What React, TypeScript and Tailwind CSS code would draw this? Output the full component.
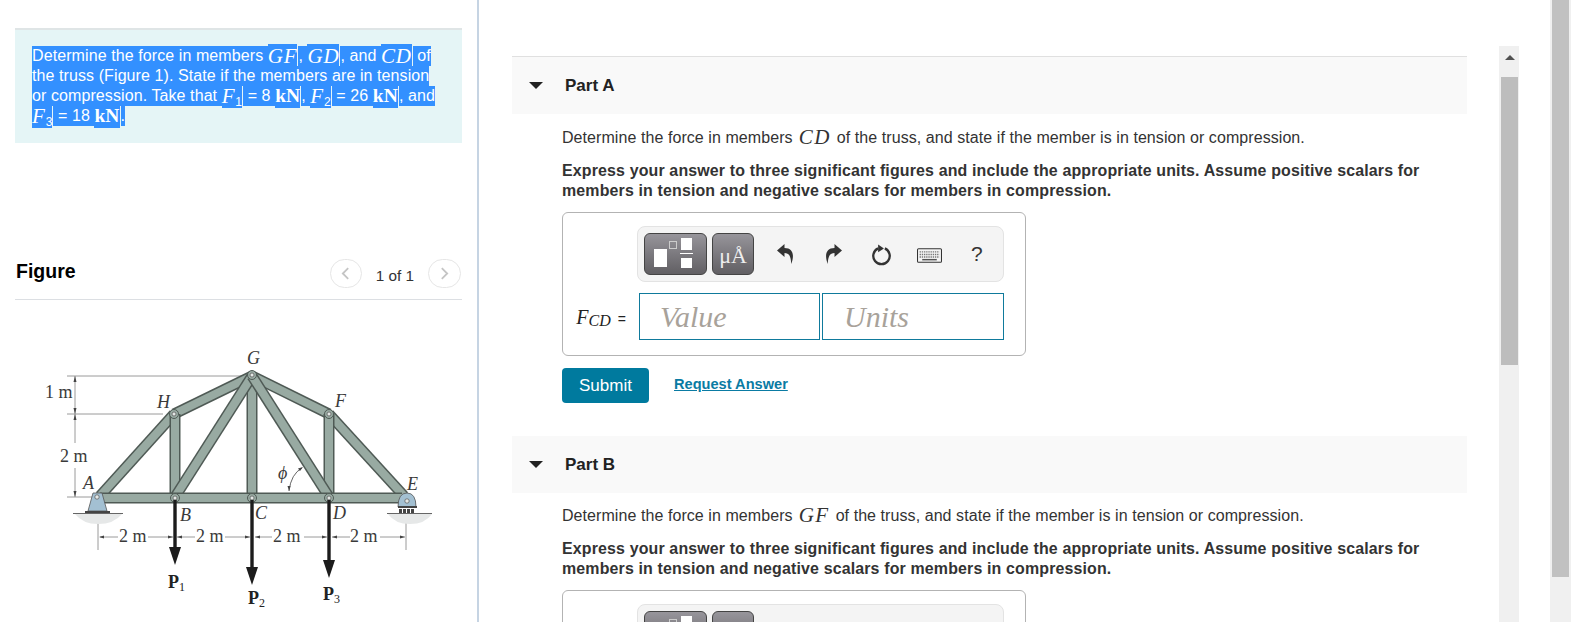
import type { ReactNode } from "react";

const sans = "font-['Liberation_Sans',Arial,sans-serif]";

// blue "selected text" run
const Sel = ({ children, tall = false }: { children: ReactNode; tall?: boolean }) => (
  <span
    className={
      tall
        ? "mr-px -my-[2px] inline-block h-6 whitespace-pre bg-[#3390ff] pt-[2px] align-top leading-5 text-white"
        : "inline-block h-5 whitespace-pre bg-[#3390ff] align-top leading-5 text-white"
    }
  >
    {children}
  </span>
);

const M = ({ children }: { children: ReactNode }) => (
  <span className="font-['Liberation_Serif',serif] text-[21px] italic leading-none tracking-[0.8px]">{children}</span>
);

const Kn = () => <b className="font-['Liberation_Serif',serif] text-[19.5px] leading-none">kN</b>;

const Sub = ({ children }: { children: ReactNode }) => <sub className="text-[12px] leading-none">{children}</sub>;

const Bar = ({ x1, y1, x2, y2, w = 11 }: { x1: number; y1: number; x2: number; y2: number; w?: number }) => (
  <g>
    <line x1={x1} y1={y1} x2={x2} y2={y2} stroke="#4f5a55" strokeWidth={w} />
    <line x1={x1} y1={y1} x2={x2} y2={y2} stroke="#98aaa2" strokeWidth={w - 3} />
  </g>
);

const Pin = ({ x, y }: { x: number; y: number }) => (
  <g>
    <circle cx={x} cy={y} r={4.5} fill="#98aaa2" stroke="#4f5a55" strokeWidth={1} />
    <circle cx={x} cy={y} r={2} fill="#e4e8e6" stroke="#555" strokeWidth={0.7} />
  </g>
);

const Force = ({ x, y1, y2 }: { x: number; y1: number; y2: number }) => (
  <g>
    <line x1={x} y1={y1} x2={x} y2={y2} stroke="#1c1c1c" strokeWidth={3.4} />
    <polygon points={`${x - 6},${y2} ${x + 6},${y2} ${x},${y2 + 18}`} fill="#1c1c1c" />
  </g>
);

const tipsRight = [173, 250, 327, 405];
const tipsLeft = [99, 177, 255, 332];

const Truss = () => (
  <svg viewBox="0 0 447 282" width="447" height="282" className="block font-['Liberation_Serif',serif]">
    <g transform="translate(-15,-340)">
      {/* dimension lines */}
      <g stroke="#9a9a9a" strokeWidth="1" fill="none">
        <line x1="67" y1="376" x2="250" y2="376" />
        <line x1="67" y1="414" x2="163" y2="414" />
        <line x1="67" y1="497" x2="93" y2="497" />
        <line x1="75" y1="376" x2="75" y2="443" />
        <line x1="75" y1="468" x2="75" y2="497" />
        <line x1="98" y1="520" x2="98" y2="550" />
        <line x1="406" y1="520" x2="406" y2="550" />
        <line x1="100" y1="537" x2="118" y2="537" />
        <line x1="148" y1="537" x2="173" y2="537" />
        <line x1="177" y1="537" x2="195" y2="537" />
        <line x1="225" y1="537" x2="250" y2="537" />
        <line x1="255" y1="537" x2="272" y2="537" />
        <line x1="304" y1="537" x2="327" y2="537" />
        <line x1="332" y1="537" x2="350" y2="537" />
        <line x1="380" y1="537" x2="405" y2="537" />
      </g>
      <g fill="#444">
        {tipsRight.map((x) => (
          <polygon key={x} points={`${x - 5},535.5 ${x},537 ${x - 5},538.5`} />
        ))}
        {tipsLeft.map((x) => (
          <polygon key={x} points={`${x + 5},535.5 ${x},537 ${x + 5},538.5`} />
        ))}
        <polygon points="73.5,382 75,376 76.5,382" />
        <polygon points="73.5,408 75,414 76.5,408" />
        <polygon points="73.5,420 75,414 76.5,420" />
        <polygon points="73.5,491 75,497 76.5,491" />
      </g>
      {/* ground */}
      <path d="M75 514 L122 514 Q114 524 98 524 Q83 524 75 514 Z" fill="#e6e8e8" />
      <path d="M388 514 L432 514 Q425 524 410 524 Q395 524 388 514 Z" fill="#e6e8e8" />
      <line x1="73" y1="513.5" x2="123" y2="513.5" stroke="#666" strokeWidth="1.2" />
      <line x1="387" y1="513.5" x2="432" y2="513.5" stroke="#666" strokeWidth="1.2" />
      {/* members */}
      <Bar x1={100} y1={496} x2={174} y2={414} />
      <Bar x1={174} y1={414} x2={252} y2={376} />
      <Bar x1={252} y1={376} x2={329} y2={414} />
      <Bar x1={329} y1={414} x2={404} y2={496} />
      <Bar x1={175} y1={414} x2={175} y2={497} />
      <Bar x1={252} y1={376} x2={252} y2={497} />
      <Bar x1={329} y1={414} x2={329} y2={497} />
      <Bar x1={175} y1={497} x2={252} y2={376} />
      <Bar x1={252} y1={376} x2={329} y2={497} />
      <Bar x1={100} y1={498} x2={402} y2={498} />
      {/* supports */}
      <path d="M93 493 L102 493 L107 511 L88 511 Z" fill="#a3c0d2" stroke="#555" strokeWidth="0.8" />
      <rect x="85" y="511" width="25" height="2" fill="#444" />
      <circle cx="97" cy="497" r="2.2" fill="#e4e8e6" stroke="#555" strokeWidth="0.7" />
      <path d="M398 507 Q398 493 407 493 Q416 493 416 507 Z" fill="#a3c0d2" stroke="#555" strokeWidth="0.8" />
      <rect x="398" y="506" width="19" height="2" fill="#444" />
      <g fill="#444">
        <rect x="399" y="509" width="3" height="4" />
        <rect x="403" y="509" width="3" height="4" />
        <rect x="407" y="509" width="3" height="4" />
        <rect x="411" y="509" width="3" height="4" />
      </g>
      <circle cx="407" cy="501" r="2.2" fill="#e4e8e6" stroke="#555" strokeWidth="0.7" />
      <Pin x={174} y={414} />
      <Pin x={252} y={375} />
      <Pin x={329} y={414} />
      <Pin x={175} y={498} />
      <Pin x={252} y={498} />
      <Pin x={329} y={498} />
      {/* loads */}
      <Force x={175} y1={500} y2={547} />
      <Force x={252} y1={500} y2={567} />
      <Force x={329} y1={500} y2={560} />
      {/* angle */}
      <path d="M302 468 Q291 474 289 491" fill="none" stroke="#666" strokeWidth="1" />
      <polygon points="303,467 298,468.5 300,471" fill="#444" />
      <polygon points="289,491 287.5,486 290.5,486" fill="#444" />
      {/* labels */}
      <g fill="#3a3a3a" fontSize="18">
        <text x="45" y="398">1 m</text>
        <text x="60" y="462">2 m</text>
        <text x="119" y="542">2 m</text>
        <text x="196" y="542">2 m</text>
        <text x="273" y="542">2 m</text>
        <text x="350" y="542">2 m</text>
      </g>
      <g fill="#3a3a3a" fontSize="18" fontStyle="italic">
        <text x="157" y="408">H</text>
        <text x="83" y="489">A</text>
        <text x="180" y="521">B</text>
        <text x="255" y="519">C</text>
        <text x="333" y="519">D</text>
        <text x="247" y="364">G</text>
        <text x="335" y="407">F</text>
        <text x="407" y="490">E</text>
        <text x="278" y="479">ϕ</text>
      </g>
      <g fill="#222" fontSize="18" fontWeight="bold">
        <text x="168" y="588">P<tspan fontSize="12" fontWeight="normal" dy="3">1</tspan></text>
        <text x="248" y="604">P<tspan fontSize="12" fontWeight="normal" dy="3">2</tspan></text>
        <text x="323" y="600">P<tspan fontSize="12" fontWeight="normal" dy="3">3</tspan></text>
      </g>
    </g>
  </svg>
);

const Toolbar = () => (
  <div className="flex h-14 w-[367px] shrink-0 items-center rounded-lg border border-[#e3e3e3] bg-[#f4f4f4] pl-[6px]">
    <div className="flex h-[42px] w-[63px] items-start rounded-md border border-[#444] bg-gradient-to-b from-[#97959b] to-[#615f63] pl-[9px]">
      <span className="mt-[15px] h-[18px] w-[13px] bg-white" />
      <span className="ml-[2px] mt-[7px] h-2 w-2 border border-[#ccc]" />
      <span className="ml-[3px] mt-[4px] flex flex-col items-center">
        <span className="h-3 w-[11px] bg-white" />
        <span className="mt-[3px] h-px w-[13px] bg-white" />
        <span className="mt-[4px] h-[10px] w-[11px] bg-white" />
      </span>
    </div>
    <div className="ml-[5px] flex h-[42px] w-[42px] items-center justify-center rounded-md border border-[#444] bg-gradient-to-b from-[#97959b] to-[#615f63] pt-[2px] font-['Liberation_Serif',serif] text-[22px] text-[#eee]">
      μÅ
    </div>
    <svg viewBox="0 0 17 20" className="ml-[23px] h-5 w-[17px]" fill="#333">
      <path d="M7.5 0 L0 6.5 L7.5 13 V9 C11.5 9 14 11.5 14.2 20 C17.5 12 16.5 4 7.5 4 Z" />
    </svg>
    <svg viewBox="0 0 17 20" className="ml-[31px] h-5 w-[17px] -scale-x-100" fill="#333">
      <path d="M7.5 0 L0 6.5 L7.5 13 V9 C11.5 9 14 11.5 14.2 20 C17.5 12 16.5 4 7.5 4 Z" />
    </svg>
    <svg viewBox="0 0 24 24" className="ml-[28px] mt-[2px] h-[23px] w-[23px]" fill="none" stroke="#333" strokeWidth="2.4">
      <path d="M15.5 4.6A8.6 8.6 0 1 1 8.5 4.6" />
      <path d="M8.5 0.5 L14.5 4.6 L8.5 8.6 Z" fill="#333" stroke="none" />
    </svg>
    <svg viewBox="0 0 24 14" className="ml-[24px] mt-[2px] h-[15px] w-[25px]" fill="none">
      <rect x="0.5" y="0.5" width="23" height="13" rx="1" fill="#f4f4f4" stroke="#333" />
      <path d="M2.5 3.5h19M2.5 6h19M2.5 8.5h19" stroke="#777" strokeWidth="1.4" strokeDasharray="1.3 0.8" />
      <path d="M5 11h14" stroke="#555" strokeWidth="1.4" />
    </svg>
    <span className={`ml-[29px] text-[21px] text-[#333] ${sans}`}>?</span>
  </div>
);

const AnswerBox = ({ sub }: { sub: string }) => (
  <div className="flex w-[464px] flex-col items-end rounded-md border border-[#b3b3b3] pb-[15px] pr-[21px] pt-[13px]">
    <Toolbar />
    <div className="mt-[11px] flex items-center">
      <span className="mr-[13px] font-['Liberation_Serif',serif] text-[20px] text-[#222]">
        <i>F</i>
        <i className="relative top-[2px] text-[16px]">{sub}</i>
        <span className={`ml-[7px] text-[14px] ${sans}`}>=</span>
      </span>
      <div className="flex h-[47px] w-[181px] items-center border border-[#0f7a9c] pl-[20px] font-['Liberation_Serif',serif] text-[30px] italic text-[#a8a29a]">
        Value
      </div>
      <div className="ml-[2px] flex h-[47px] w-[182px] items-center border border-[#0f7a9c] pl-[21px] font-['Liberation_Serif',serif] text-[30px] italic text-[#a8a29a]">
        Units
      </div>
    </div>
  </div>
);

const PartHeader = ({ label }: { label: string }) => (
  <div className="flex h-[57px] w-[955px] items-center bg-[#f9f9f9] pl-[17px]">
    <span className="h-0 w-0 border-x-[7px] border-t-[7px] border-x-transparent border-t-[#222]" />
    <span className="ml-[22px] text-[17px] font-bold text-[#222]">{label}</span>
  </div>
);

const Question = ({ name }: { name: string }) => (
  <div className="pl-[50px] text-[16px] text-[#333]">
    <p className="flex h-5 items-center gap-[6px] whitespace-nowrap tracking-[0.07px]">
      Determine the force in members
      <span className="font-['Liberation_Serif',serif] text-[21px] italic tracking-[1.5px]">{name}</span>
      of the truss, and state if the member is in tension or compression.
    </p>
    <p className="mt-[13px] w-[870px] text-[15.95px] font-bold leading-5 tracking-[0.15px] text-[#333]">
      Express your answer to three significant figures and include the appropriate units. Assume positive scalars for members in tension and negative scalars for members in compression.
    </p>
  </div>
);

export default function App() {
  return (
    <div className={`flex h-[622px] w-[1571px] overflow-hidden bg-white ${sans}`}>
      {/* left column */}
      <div className="h-full w-[479px] shrink-0 border-r-2 border-[#c6d4e3] pl-[15px] pt-[28px]">
        <div className="h-[115px] w-[447px] border-t-2 border-[#dfe5e6] bg-[#e5f5f6] pl-[17px] pt-[16px]">
          <p className="w-[420px] text-[16px] leading-5 tracking-[0.09px] text-white">
            <Sel>Determine the force in members </Sel>
            <Sel tall><M>GF</M></Sel>
            <Sel>, </Sel>
            <Sel tall><M>GD</M></Sel>
            <Sel>, and </Sel>
            <Sel tall><M>CD</M></Sel>
            <Sel> of</Sel>
            <br />
            <Sel>the truss (Figure 1). State if the members are in tension</Sel>
            <br />
            <Sel>or compression. Take that </Sel>
            <Sel tall><M>F</M><Sub>1</Sub></Sel>
            <Sel> = 8 </Sel>
            <Sel tall><Kn /></Sel>
            <Sel>, </Sel>
            <Sel tall><M>F</M><Sub>2</Sub></Sel>
            <Sel> = 26 </Sel>
            <Sel tall><Kn /></Sel>
            <Sel>, and</Sel>
            <br />
            <Sel tall><M>F</M><Sub>3</Sub></Sel>
            <Sel> = 18 </Sel>
            <Sel tall><Kn /></Sel>
            <Sel>.</Sel>
          </p>
        </div>

        <div className="mt-[113px] flex h-[44px] w-[447px] items-start border-b border-[#dcdfe3]">
          <h2 className="ml-px mt-px text-[19.5px] font-bold text-black">Figure</h2>
          <div className="ml-auto flex items-start pt-[3px]">
            <span className="flex h-[29px] w-8 items-center justify-center rounded-full border border-[#e6e6e6] text-[#c4c4c4]">
              <svg viewBox="0 0 10 14" className="h-[13px] w-[9px]" fill="none" stroke="currentColor" strokeWidth="2"><path d="M8 1 2 7l6 6" /></svg>
            </span>
            <span className="mx-[14px] mt-[6px] text-[15.3px] text-[#333]">1 of 1</span>
            <span className="mr-px flex h-[29px] w-[33px] items-center justify-center rounded-full border border-[#e6e6e6] text-[#c4c4c4]">
              <svg viewBox="0 0 10 14" className="h-[13px] w-[9px]" fill="none" stroke="currentColor" strokeWidth="2"><path d="M2 1l6 6-6 6" /></svg>
            </span>
          </div>
        </div>
        <div className="mt-[40px]">
          <Truss />
        </div>
      </div>

      {/* right column */}
      <div className="relative h-full flex-1 overflow-hidden pl-[33px] pt-[56px]">
        <div className="w-[955px] border-t border-[#e0e0e0]">
          <PartHeader label="Part A" />
        </div>
        <div className="mt-[14px]">
          <Question name="CD" />
        </div>
        <div className="ml-[50px] mt-[11px]">
          <AnswerBox sub="CD" />
          <div className="mt-[12px] flex items-center">
            <button className="h-[35px] w-[87px] rounded-sm bg-[#007a9e] text-[17px] text-white">Submit</button>
            <a className="mb-[2px] ml-[25px] text-[14.6px] font-bold text-[#0a7ba3] underline">Request Answer</a>
          </div>
        </div>
        <div className="mt-[33px]">
          <PartHeader label="Part B" />
        </div>
        <div className="mt-[13px]">
          <Question name="GF" />
        </div>
        <div className="ml-[50px] mt-[11px]">
          <AnswerBox sub="GF" />
        </div>

        {/* inner and outer scrollbars */}
        <div className="absolute bottom-0 right-[52px] top-[46px] w-5 bg-[#f0f0f0] pl-[2px]">
          <div className="flex h-[31px] w-[17px] justify-center pt-[9px]">
            <span className="h-0 w-0 border-x-[5px] border-b-[5px] border-x-transparent border-b-[#505050]" />
          </div>
          <div className="h-[288px] w-[17px] bg-[#bdbdbd]" />
        </div>
        <div className="absolute bottom-0 right-0 top-0 w-[21px] bg-[#f0f0f0] pl-[2px]">
          <div className="h-[577px] w-[17px] bg-[#c1c1c1]" />
        </div>
      </div>
    </div>
  );
}
